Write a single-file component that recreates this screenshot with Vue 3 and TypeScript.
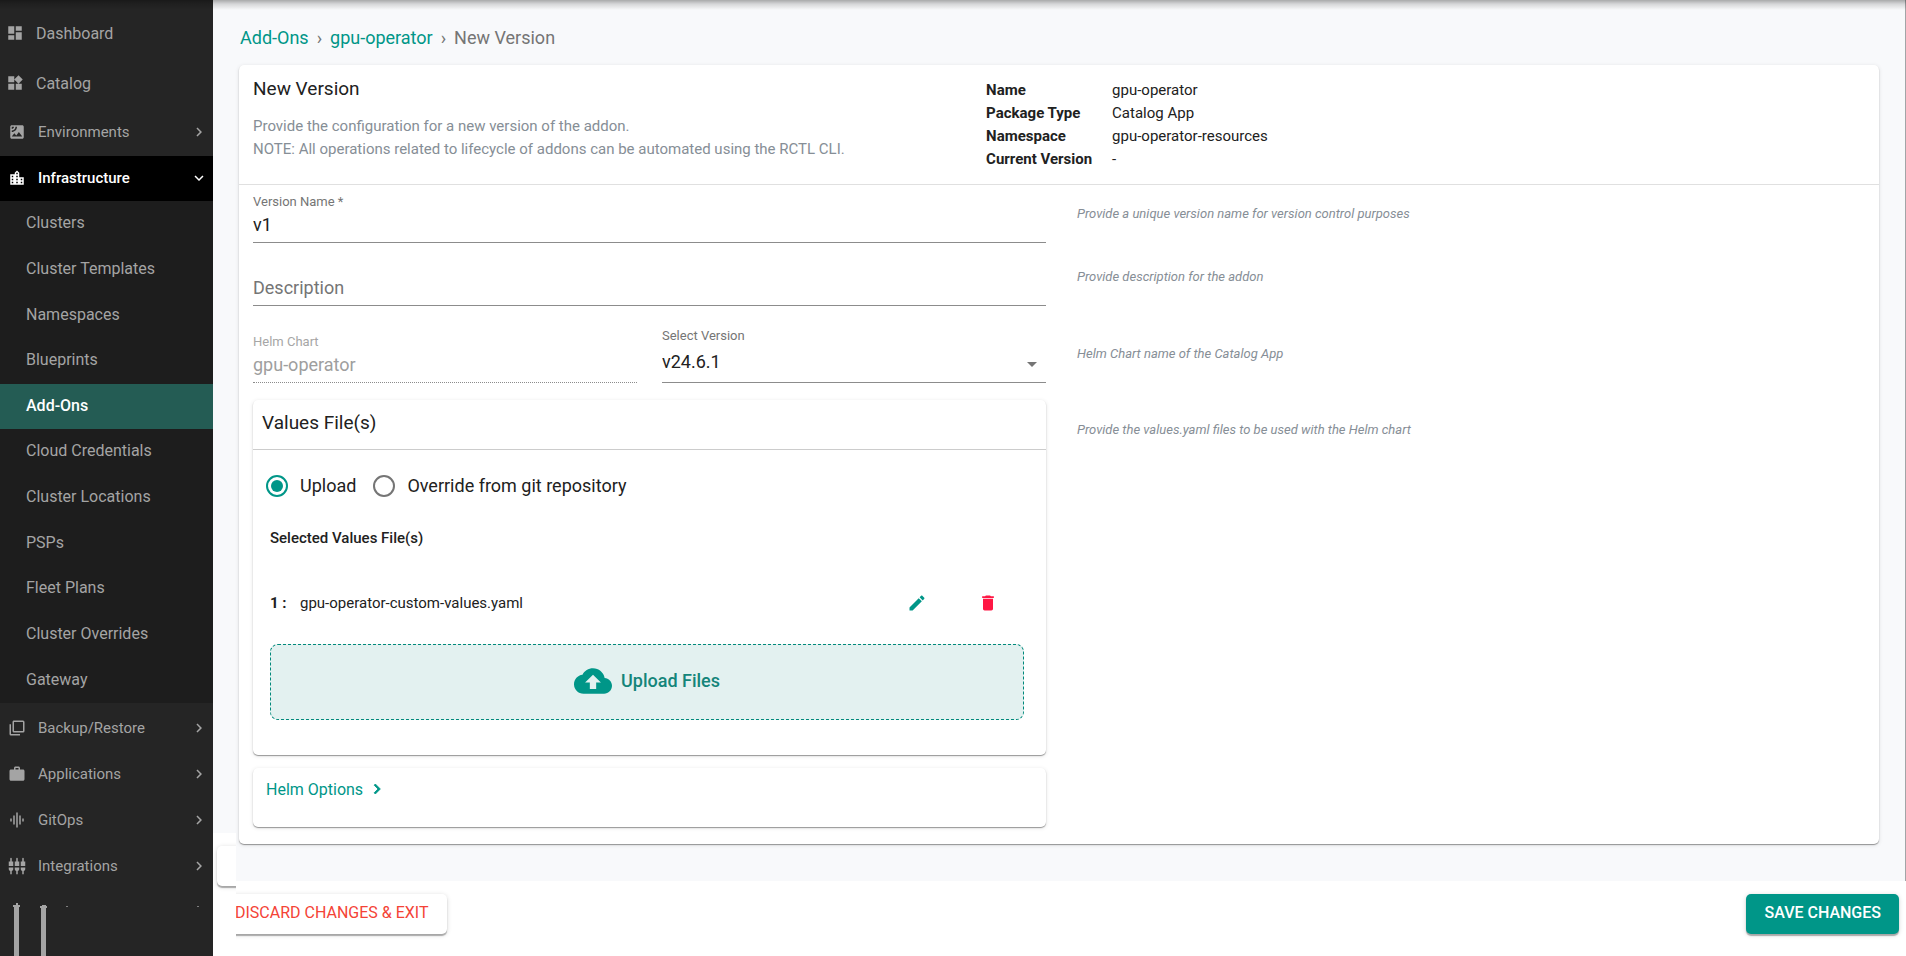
<script setup lang="ts">
import { ref } from 'vue'

interface NavItem {
  label: string
  icon: string
}

const chevronRight = 'M10 6L8.59 7.41 13.17 12l-4.58 4.59L10 18l6-6z'
const chevronDown = 'M16.59 8.59L12 13.17 7.41 8.59 6 10l6 6 6-6z'

const topLinks: NavItem[] = [
  { label: 'Dashboard', icon: 'M3 13h8V3H3v10zm0 8h8v-6H3v6zm10 0h8V11h-8v10zm0-18v6h8V3h-8z' },
  { label: 'Catalog', icon: 'M13 13v8h8v-8h-8zM3 21h8v-8H3v8zM3 3v8h8V3H3zm13.66-1.31L11 7.34 16.66 13l5.66-5.66-5.66-5.65z' },
]

const environments: NavItem = {
  label: 'Environments',
  icon: 'M19 3H5c-1.1 0-2 .9-2 2v14c0 1.1.9 2 2 2h14c1.1 0 2-.9 2-2V5c0-1.1-.9-2-2-2zM5 4.99h3C8 6.65 6.66 8 5 8V4.99zM5 12v-2c2.76 0 5-2.25 5-5.01h2C12 8.86 8.87 12 5 12zm0 6l3.5-4.5 2.5 3.01L14.5 12l4.5 6H5z',
}

const infrastructure: NavItem = {
  label: 'Infrastructure',
  icon: 'M19 15h-2v-2h2m0 6h-2v-2h2M13 7h-2V5h2m0 6h-2V9h2m0 6h-2v-2h2m0 6h-2v-2h2M7 11H5V9h2m0 6H5v-2h2m0 6H5v-2h2m8-6V5l-3-3-3 3v2H3v14h18V11h-6z',
}

const subLinks = [
  'Clusters',
  'Cluster Templates',
  'Namespaces',
  'Blueprints',
  'Add-Ons',
  'Cloud Credentials',
  'Cluster Locations',
  'PSPs',
  'Fleet Plans',
  'Cluster Overrides',
  'Gateway',
]

const lowerGroups: NavItem[] = [
  {
    label: 'Backup/Restore',
    icon: 'M20 16V4H8v12h12m2 0a2 2 0 0 1-2 2H8c-1.11 0-2-.9-2-2V4c0-1.11.89-2 2-2h12a2 2 0 0 1 2 2v12m-6 4v2H4a2 2 0 0 1-2-2V7h2v13h12z',
  },
  {
    label: 'Applications',
    icon: 'M20 6h-4V4c0-1.11-.89-2-2-2h-4c-1.11 0-2 .89-2 2v2H4c-1.11 0-1.99.89-1.99 2L2 19c0 1.11.89 2 2 2h16c1.11 0 2-.89 2-2V8c0-1.11-.89-2-2-2zm-6 0h-4V4h4v2z',
  },
  {
    label: 'GitOps',
    icon: 'M7 18h2V6H7v12zm4 4h2V2h-2v20zm-8-8h2v-4H3v4zm12 4h2V6h-2v12zm4-8v4h2v-4h-2z',
  },
  {
    label: 'Integrations',
    icon: 'M5 2c0-.55-.45-1-1-1s-1 .45-1 1v4H1v6h6V6H5V2zm4 14c0 1.3.84 2.4 2 2.82V23h2v-4.18c1.16-.41 2-1.51 2-2.82v-2H9v2zm-8 0c0 1.3.84 2.4 2 2.82V23h2v-4.18C6.16 18.4 7 17.3 7 16v-2H1v2zM21 6V2c0-.55-.45-1-1-1s-1 .45-1 1v4h-2v6h6V6h-2zm-8-4c0-.55-.45-1-1-1s-1 .45-1 1v4H9v6h6V6h-2V2zm4 14c0 1.3.84 2.4 2 2.82V23h2v-4.18c1.16-.41 2-1.51 2-2.82v-2h-6v2z',
  },
]

const details = [
  { term: 'Name', value: 'gpu-operator' },
  { term: 'Package Type', value: 'Catalog App' },
  { term: 'Namespace', value: 'gpu-operator-resources' },
  { term: 'Current Version', value: '-' },
]

const activeSub = ref('Add-Ons')
const versionName = ref('v1')
const description = ref('')
const chart = ref('gpu-operator')
const chartVersion = ref('v24.6.1')
const source = ref<'upload' | 'git'>('upload')
const files = ref(['gpu-operator-custom-values.yaml'])
</script>

<template>
  <div class="shell">
    <nav class="sidebar" aria-label="Main">
      <a v-for="item in topLinks" :key="item.label" href="#" class="nav-link">
        <svg class="nav-icon" viewBox="0 0 24 24" aria-hidden="true"><path :d="item.icon" /></svg>
        <span>{{ item.label }}</span>
      </a>

      <button type="button" class="nav-group environments">
        <svg class="nav-icon" viewBox="0 0 24 24" aria-hidden="true"><path :d="environments.icon" /></svg>
        <span class="group-label">{{ environments.label }}</span>
        <svg class="nav-chevron" viewBox="0 0 24 24" aria-hidden="true"><path :d="chevronRight" /></svg>
      </button>

      <button type="button" class="nav-group open" aria-expanded="true">
        <svg class="nav-icon" viewBox="0 0 24 24" aria-hidden="true"><path fill-rule="evenodd" :d="infrastructure.icon" /></svg>
        <span class="group-label">{{ infrastructure.label }}</span>
        <svg class="nav-chevron" viewBox="0 0 24 24" aria-hidden="true"><path :d="chevronDown" /></svg>
      </button>

      <div class="submenu">
        <a
          v-for="label in subLinks"
          :key="label"
          href="#"
          class="sub-link"
          :class="{ active: label === activeSub }"
          @click.prevent="activeSub = label"
        >{{ label }}</a>
      </div>

      <div class="lower">
        <button v-for="item in lowerGroups" :key="item.label" type="button" class="nav-group">
          <svg class="nav-icon" viewBox="0 0 24 24" aria-hidden="true"><path :d="item.icon" /></svg>
          <span class="group-label">{{ item.label }}</span>
          <svg class="nav-chevron" viewBox="0 0 24 24" aria-hidden="true"><path :d="chevronRight" /></svg>
        </button>
      </div>

      <svg class="nav-tail" viewBox="0 0 213 67" aria-hidden="true">
        <path d="M16 14h2v2h2v2h-1v49h-5V18h-1v-2h3z" />
        <path d="M40 17h2v-1h4v1h1v2h-1v48h-5V19h-1z" />
        <path d="M66 17h2v1h-2zM197 17h2v1h-2z" opacity="0.7" />
      </svg>
    </nav>

    <div class="main">
      <main class="content">
        <nav class="breadcrumb" aria-label="Breadcrumb">
          <a href="#">Add-Ons</a>
          <span class="sep" aria-hidden="true">›</span>
          <a href="#">gpu-operator</a>
          <span class="sep" aria-hidden="true">›</span>
          <span>New Version</span>
        </nav>

        <section class="card">
          <header class="card-head">
            <div>
              <h1>New Version</h1>
              <p class="intro">
                Provide the configuration for a new version of the addon.<br />
                NOTE: All operations related to lifecycle of addons can be automated using the RCTL CLI.
              </p>
            </div>
            <dl class="details">
              <template v-for="d in details" :key="d.term">
                <dt>{{ d.term }}</dt>
                <dd>{{ d.value }}</dd>
              </template>
            </dl>
          </header>

          <form id="version-form" class="form" @submit.prevent>
            <div class="cell name-cell">
              <label for="version-name">Version Name *</label>
              <input id="version-name" v-model="versionName" type="text" />
            </div>
            <p class="hint">Provide a unique version name for version control purposes</p>

            <div class="cell description-cell">
              <input v-model="description" type="text" placeholder="Description" aria-label="Description" />
            </div>
            <p class="hint">Provide description for the addon</p>

            <div class="cell chart-cell">
              <div class="field disabled">
                <label for="helm-chart">Helm Chart</label>
                <input id="helm-chart" v-model="chart" type="text" disabled />
              </div>
              <div class="field">
                <label for="chart-version">Select Version</label>
                <div class="select-wrap">
                  <select id="chart-version" v-model="chartVersion">
                    <option>v24.6.1</option>
                  </select>
                  <svg viewBox="0 0 24 24" aria-hidden="true"><path d="M7 10l5 5 5-5z" /></svg>
                </div>
              </div>
            </div>
            <p class="hint">Helm Chart name of the Catalog App</p>

            <div class="cell panels">
              <section class="panel">
                <h2>Values File(s)</h2>
                <div class="sources" role="radiogroup" aria-label="Values file source">
                  <label><input v-model="source" type="radio" name="source" value="upload" />Upload</label>
                  <label><input v-model="source" type="radio" name="source" value="git" />Override from git repository</label>
                </div>
                <div class="files">
                  <h3>Selected Values File(s)</h3>
                  <div v-for="(file, i) in files" :key="file" class="file">
                    <strong>{{ i + 1 }} :</strong>
                    <span class="file-name">{{ file }}</span>
                    <button type="button" class="icon-btn edit" aria-label="Edit file">
                      <svg viewBox="0 0 24 24" aria-hidden="true"><path d="M3 17.25V21h3.75L17.81 9.94l-3.75-3.75L3 17.25zM20.71 7.04c.39-.39.39-1.02 0-1.41l-2.34-2.34c-.39-.39-1.02-.39-1.41 0l-1.83 1.83 3.75 3.75 1.83-1.83z" /></svg>
                    </button>
                    <button type="button" class="icon-btn delete" aria-label="Delete file">
                      <svg viewBox="0 0 24 24" aria-hidden="true"><path d="M6 19c0 1.1.9 2 2 2h8c1.1 0 2-.9 2-2V7H6v12zM19 4h-3.5l-1-1h-5l-1 1H5v2h14V4z" /></svg>
                    </button>
                  </div>
                  <button type="button" class="upload">
                    <svg viewBox="0 0 24 24" aria-hidden="true"><path d="M19.35 10.04C18.67 6.59 15.64 4 12 4 9.11 4 6.6 5.64 5.35 8.04 2.34 8.36 0 10.91 0 14c0 3.31 2.69 6 6 6h13c2.76 0 5-2.24 5-5 0-2.64-2.05-4.78-4.65-4.96zM14 13v4h-4v-4H7l5-5 5 5h-3z" /></svg>
                    Upload Files
                  </button>
                </div>
              </section>

              <section class="panel options">
                <button type="button" class="options-toggle">
                  Helm Options
                  <svg viewBox="0 0 24 24" aria-hidden="true"><path :d="chevronRight" /></svg>
                </button>
              </section>
            </div>
            <p class="hint values-hint">Provide the values.yaml files to be used with the Helm chart</p>
          </form>
        </section>
      </main>

      <footer class="actions">
        <button type="button" class="btn discard">DISCARD CHANGES &amp; EXIT</button>
        <button type="submit" form="version-form" class="btn save">SAVE CHANGES</button>
      </footer>

      <div class="edge" aria-hidden="true"><div class="edge-tab"></div></div>
    </div>

    <div class="top-shade" aria-hidden="true"></div>
  </div>
</template>

<style>
body {
  background: #f8f9fb;
}
</style>

<style scoped>
.shell,
.shell * {
  box-sizing: border-box;
}

.shell {
  position: relative;
  display: grid;
  grid-template-columns: 213px minmax(0, 1fr);
  height: 100vh;
  overflow: hidden;
  font-family: Roboto, "Liberation Sans", sans-serif;
  font-size: 15px;
  color: #212121;
}

button,
input,
select {
  font-family: inherit;
  margin: 0;
}

button {
  cursor: pointer;
}

a {
  text-decoration: none;
}

h1,
h2,
h3,
p,
dl,
dd {
  margin: 0;
}

.top-shade {
  position: absolute;
  inset: 0 0 auto;
  height: 10px;
  background: linear-gradient(rgba(0, 0, 0, 0.32), rgba(0, 0, 0, 0.14) 40%, rgba(0, 0, 0, 0));
  pointer-events: none;
}

/* Sidebar */

.sidebar {
  display: flex;
  flex-direction: column;
  padding-top: 9px;
  background: #252525;
  color: #a4a4a4;
  overflow: hidden;
}

.nav-link,
.nav-group {
  display: flex;
  align-items: center;
  flex: none;
  gap: 12px;
  color: inherit;
}

.nav-link {
  height: 50px;
  padding: 0 0 2px 6px;
  font-size: 16px;
}

.nav-group {
  width: 100%;
  height: 46px;
  padding: 0 5px 1px 8px;
  border: 0;
  background: none;
  font-size: 15px;
  text-align: left;
}

.nav-group.environments {
  height: 47px;
}

.nav-group.open {
  height: 45px;
  background: #000;
  color: #fff;
  font-weight: 500;
}

.group-label {
  flex: 1;
}

.nav-icon,
.nav-chevron {
  flex: none;
  width: 18px;
  height: 18px;
  fill: currentColor;
}

.submenu {
  display: grid;
  grid-auto-rows: 1fr;
  flex: none;
  min-height: 502px;
  background: #1d1d1d;
}

.sub-link {
  display: flex;
  align-items: center;
  padding: 0 0 2px 26px;
  font-size: 16px;
  color: inherit;
}

.sub-link.active {
  background: #245c54;
  color: #fff;
  font-weight: 500;
}

.lower {
  flex: none;
  padding-top: 2px;
}

.nav-tail {
  flex: none;
  width: 213px;
  height: 67px;
  fill: #a4a4a4;
}

/* Main column */

.main {
  position: relative;
  display: flex;
  flex-direction: column;
  min-width: 0;
}

.content {
  flex: 1;
  min-height: 0;
  padding: 0 26px 0 26px;
  border-right: 1px solid #a3a5a7;
  background: #f8f9fb;
  overflow: hidden;
}

.breadcrumb {
  display: flex;
  align-items: center;
  gap: 8px;
  height: 65px;
  padding: 10px 0 0 1px;
  font-size: 18px;
  color: #757575;
}

.breadcrumb a {
  color: #009688;
}

.card,
.panel {
  border-radius: 5px;
  background: #fff;
  box-shadow: 0 1px 1px rgba(0, 0, 0, 0.36), 0 1px 4px rgba(0, 0, 0, 0.12);
}

.card-head {
  display: grid;
  grid-template-columns: 41fr 49fr;
  padding: 12px 0 13px;
  border-bottom: 1px solid #e0e0e0;
}

.card-head > div {
  padding-left: 14px;
}

h1,
h2 {
  font-size: 19px;
  font-weight: 400;
  line-height: 24px;
}

.intro {
  margin-top: 14px;
  line-height: 23px;
  color: #868e96;
}

.details {
  display: grid;
  grid-template-columns: 126px 1fr;
  align-content: start;
  padding-top: 2px;
  line-height: 23px;
}

.details dt {
  font-weight: 700;
}

.form {
  display: grid;
  grid-template-columns: 1fr 1fr;
}

.cell {
  padding: 0 13px 0 14px;
  min-width: 0;
}

.name-cell {
  padding-top: 9px;
}

.description-cell {
  padding-top: 30px;
}

.chart-cell {
  display: grid;
  grid-template-columns: 1fr 1fr;
  align-items: end;
  gap: 25px;
  padding-top: 22px;
}

.name-cell label,
.field label {
  display: block;
  font-size: 13px;
  line-height: 16px;
  color: #757575;
}

.disabled label {
  color: #a6a6a6;
}

.cell input[type="text"],
select {
  display: block;
  width: 100%;
  height: 33px;
  padding: 0 0 4px;
  border: 0;
  border-bottom: 1px solid #8c8c8c;
  border-radius: 0;
  outline: 0;
  background: transparent;
  font-size: 18px;
  color: #212121;
}

.cell input[type="text"]::placeholder {
  color: #757575;
  opacity: 1;
}

.cell input[type="text"]:disabled {
  border-bottom-style: dotted;
  color: #9e9e9e;
}

.select-wrap {
  position: relative;
}

select {
  appearance: none;
  height: 39px;
}

.select-wrap svg {
  position: absolute;
  right: 2px;
  top: 8px;
  width: 24px;
  height: 24px;
  fill: #757575;
  pointer-events: none;
}

.hint {
  align-self: end;
  padding: 0 18px 19px;
  font-size: 13px;
  font-style: italic;
  line-height: 20px;
  color: #868e96;
}

.values-hint {
  align-self: start;
  padding-top: 37px;
}

.panels {
  display: flex;
  flex-direction: column;
  gap: 13px;
  padding-top: 17px;
  padding-bottom: 17px;
}

.panel h2 {
  padding: 11px 9px 14px;
  border-bottom: 1px solid #ccc;
}

.sources {
  display: flex;
  gap: 17px;
  padding: 24px 13px 0;
  font-size: 18px;
  line-height: 24px;
}

.sources label {
  display: flex;
  align-items: center;
  gap: 12px;
}

.sources input {
  appearance: none;
  display: grid;
  place-items: center;
  width: 22px;
  height: 22px;
  border: 2px solid #757575;
  border-radius: 50%;
}

.sources input:checked {
  border-color: #009688;
}

.sources input:checked::before {
  content: "";
  width: 12px;
  height: 12px;
  border-radius: 50%;
  background: #009688;
}

.files {
  padding: 30px 22px 35px 17px;
}

.files h3 {
  font-size: 15px;
  font-weight: 500;
  line-height: 20px;
}

.file {
  display: flex;
  align-items: center;
  height: 40px;
  margin: 35px 0 21px;
  padding-right: 16px;
}

.file strong {
  width: 30px;
  font-weight: 700;
}

.file-name {
  flex: 1;
}

.icon-btn {
  display: grid;
  place-items: center;
  width: 40px;
  height: 40px;
  padding: 0;
  border: 0;
  background: none;
}

.icon-btn svg {
  width: 20px;
  height: 20px;
  fill: currentColor;
}

.edit {
  margin-right: 31px;
  color: #009688;
}

.delete {
  color: #ff1744;
}

.upload {
  display: flex;
  align-items: center;
  justify-content: center;
  gap: 9px;
  width: 100%;
  height: 76px;
  padding: 0 0 3px;
  border: 1px dashed #00897b;
  border-radius: 8px;
  background: #e3f1f0;
  color: #14857a;
  font-size: 18px;
  font-weight: 500;
}

.upload svg {
  width: 38px;
  height: 38px;
  fill: #009688;
}

.options {
  padding: 11px 13px 28px;
}

.options-toggle {
  display: flex;
  align-items: center;
  gap: 4px;
  height: 20px;
  padding: 0;
  border: 0;
  background: none;
  color: #009688;
  font-size: 16px;
}

.options-toggle svg {
  width: 20px;
  height: 20px;
  fill: currentColor;
  stroke: currentColor;
}

/* Footer */

.actions {
  display: flex;
  align-items: flex-start;
  justify-content: space-between;
  flex: none;
  height: 75px;
  padding: 13px 7px 0 4px;
  background: #fff;
}

.btn {
  height: 40px;
  padding: 0 18px 3px;
  border: 0;
  border-radius: 5px;
  font-size: 16px;
  box-shadow: 0 2px 1px rgba(0, 0, 0, 0.28), 0 1px 5px rgba(0, 0, 0, 0.16);
}

.discard {
  background: #fff;
  color: #f44336;
}

.save {
  background: #009688;
  color: #fff;
  font-weight: 500;
}

.edge {
  position: absolute;
  left: 0;
  bottom: 0;
  width: 23px;
  height: 123px;
  padding: 13px 0 0 4px;
  background: #fff;
  overflow: hidden;
}

.edge-tab {
  width: 40px;
  height: 40px;
  border-radius: 5px;
  background: #fff;
  box-shadow: 0 2px 1px rgba(0, 0, 0, 0.28), 0 1px 5px rgba(0, 0, 0, 0.16);
}
</style>
